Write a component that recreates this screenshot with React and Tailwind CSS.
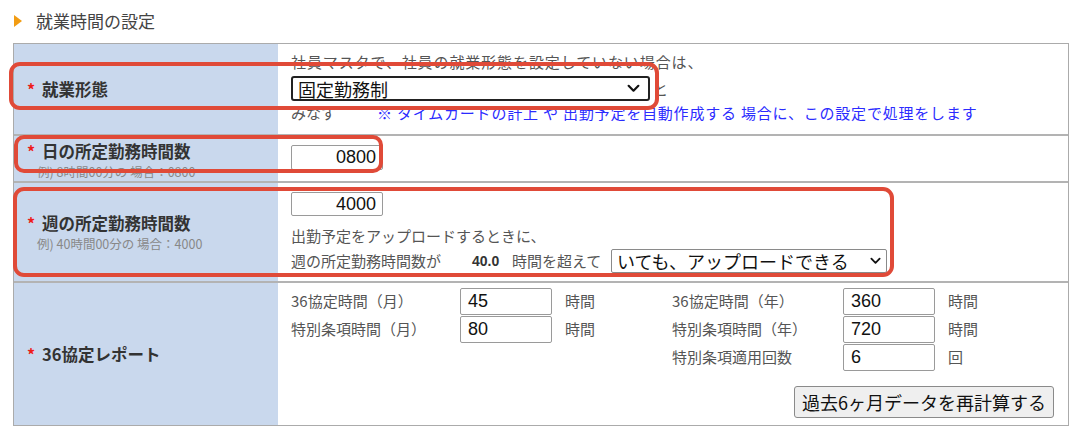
const jp = "font-['Noto_Sans_CJK_JP',sans-serif]"
const num = "font-['Liberation_Sans','Noto_Sans_CJK_JP',sans-serif]"

function Chevron({ className }) {
  return (
    <svg viewBox="0 0 12 8" className={className} fill="none" stroke="currentColor" strokeWidth="2" strokeLinecap="round" strokeLinejoin="round">
      <polyline points="1.5,1.5 6,6 10.5,1.5" />
    </svg>
  )
}

function Label({ title, sub }) {
  return (
    <div className="pl-[13px]">
      <div className="flex items-center h-[20px] leading-[20px]">
        <span className="text-[#ee1c1c] font-bold text-[16px] w-[15px]">*</span>
        <span className="text-[16.5px] font-bold text-[#333]">{title}</span>
      </div>
      {sub && <div className="pl-[10px] mt-[4px] text-[12.5px] leading-[14px] text-[#888]">{sub}</div>}
    </div>
  )
}

function NumBox({ value, w = 'w-[92px]', h = 'h-[27px]', right }) {
  return (
    <div className={`${w} ${h} border border-[#9a9a9a] rounded-[2px] bg-white flex items-center ${right ? 'justify-end pr-[6px]' : 'pl-[7px]'} ${num} text-[18px] text-[#111]`}>
      {value}
    </div>
  )
}

const pact = [
  ['36協定時間（月）', '45', '時間', '36協定時間（年）', '360', '時間'],
  ['特別条項時間（月）', '80', '時間', '特別条項時間（年）', '720', '時間'],
  [null, null, null, '特別条項適用回数', '6', '回'],
]

export default function App() {
  return (
    <div className={`relative w-[1073px] h-[436px] bg-white ${jp} text-[#555] text-[15px]`}>
      {/* heading */}
      <div className="h-[43px] flex items-center pl-[14px] pb-[1px]">
        <span className="w-0 h-0 border-y-[6px] border-y-transparent border-l-[8px] border-l-[#f29c12]" />
        <span className="ml-[14px] text-[17px] text-[#444]">就業時間の設定</span>
      </div>

      {/* settings table */}
      <div className="ml-[13px] w-[1056px] border border-[#ababab]">
        {/* 就業形態 */}
        <div className="grid grid-cols-[264px_1fr] h-[90px]">
          <div className="bg-[#c9d8ed] flex items-center"><Label title="就業形態" /></div>
          <div className="pl-[13px] pt-[8px] leading-[20px]">
            <div className="tracking-[0.9px]">社員マスタで、社員の就業形態を設定していない場合は、</div>
            <div className="mt-[4px] flex items-center">
              <div className="w-[359px] h-[25px] border-2 border-[#222] rounded-[3px] flex items-center justify-between pl-[5px] pr-[8px] text-[18px] text-[#111]">
                固定勤務制
                <Chevron className="w-[13px] h-[9px] text-[#111]" />
              </div>
              <span className="ml-[3px]">と</span>
            </div>
            <div className="mt-[2px] flex">
              <span className="w-[86px]">みなす</span>
              <span className="text-[#2b2bff] tracking-[0.8px]">※ タイムカードの計上 や 出勤予定を自動作成する 場合に、この設定で処理をします</span>
            </div>
          </div>
        </div>

        {/* 日の所定勤務時間数 */}
        <div className="grid grid-cols-[264px_1fr] h-[47px] border-t-2 border-[#b3b3b3]">
          <div className="bg-[#c9d8ed] pt-[5px]"><Label title="日の所定勤務時間数" sub="例) 8時間00分の 場合：0800" /></div>
          <div className="pl-[13px] pt-[9px]"><NumBox value="0800" h="h-[25px]" right /></div>
        </div>

        {/* 週の所定勤務時間数 */}
        <div className="grid grid-cols-[264px_1fr] h-[100px] border-t-2 border-[#b3b3b3]">
          <div className="bg-[#c9d8ed] flex items-center"><Label title="週の所定勤務時間数" sub="例) 40時間00分の 場合：4000" /></div>
          <div className="pl-[13px] pt-[9px] leading-[20px]">
            <NumBox value="4000" h="h-[24px]" right />
            <div className="mt-[10px]">出勤予定をアップロードするときに、</div>
            <div className="mt-[3px] flex items-center">
              <span className="w-[170px]">週の所定勤務時間数が</span>
              <span className={`ml-[11px] w-[40px] text-[14px] font-bold text-[#333] ${num}`}>40.0</span>
              <span className="w-[99px]">時間を超えて</span>
              <div className="w-[276px] h-[24px] border border-[#8a8a8a] rounded-[2px] flex items-center justify-between pl-[5px] pr-[5px] text-[18px] text-[#111]">
                いても、アップロードできる
                <Chevron className="w-[11px] h-[8px] text-[#111]" />
              </div>
            </div>
          </div>
        </div>

        {/* 36協定レポート */}
        <div className="grid grid-cols-[264px_1fr] h-[144px] border-t-2 border-[#b3b3b3]">
          <div className="bg-[#c9d8ed] flex items-center"><Label title="36協定レポート" /></div>
          <div className="pl-[13px] pr-[14px] pt-[5px]">
            <div className="grid grid-cols-[381px_1fr] gap-y-[1px]">
              {pact.map((r, i) => (
                [0, 3].map((o) => (
                  <div key={`${i}-${o}`} className="h-[27px] flex items-center">
                    {r[o] && (
                      <>
                        <span className={o === 0 ? 'w-[169px]' : 'w-[171px]'}>{r[o]}</span>
                        <NumBox value={r[o + 1]} />
                        <span className="ml-[13px]">{r[o + 2]}</span>
                      </>
                    )}
                  </div>
                ))
              ))}
            </div>
            <div className="mt-[15px] flex justify-end">
              <button className="h-[32px] px-[7px] border border-[#8a8a8a] rounded-[3px] bg-[#efefef] text-[18px] text-[#111]">
                過去6ヶ月データを再計算する
              </button>
            </div>
          </div>
        </div>
      </div>

      {/* red annotation boxes */}
      <div className="absolute left-[9px] top-[62px] w-[650px] h-[48px] border-4 border-[#e04a38] rounded-[11px]" />
      <div className="absolute left-[14px] top-[135px] w-[369px] h-[38px] border-4 border-[#e04a38] rounded-[10px]" />
      <div className="absolute left-[13px] top-[187px] w-[881px] h-[90px] border-4 border-[#e04a38] rounded-[11px]" />
    </div>
  )
}
